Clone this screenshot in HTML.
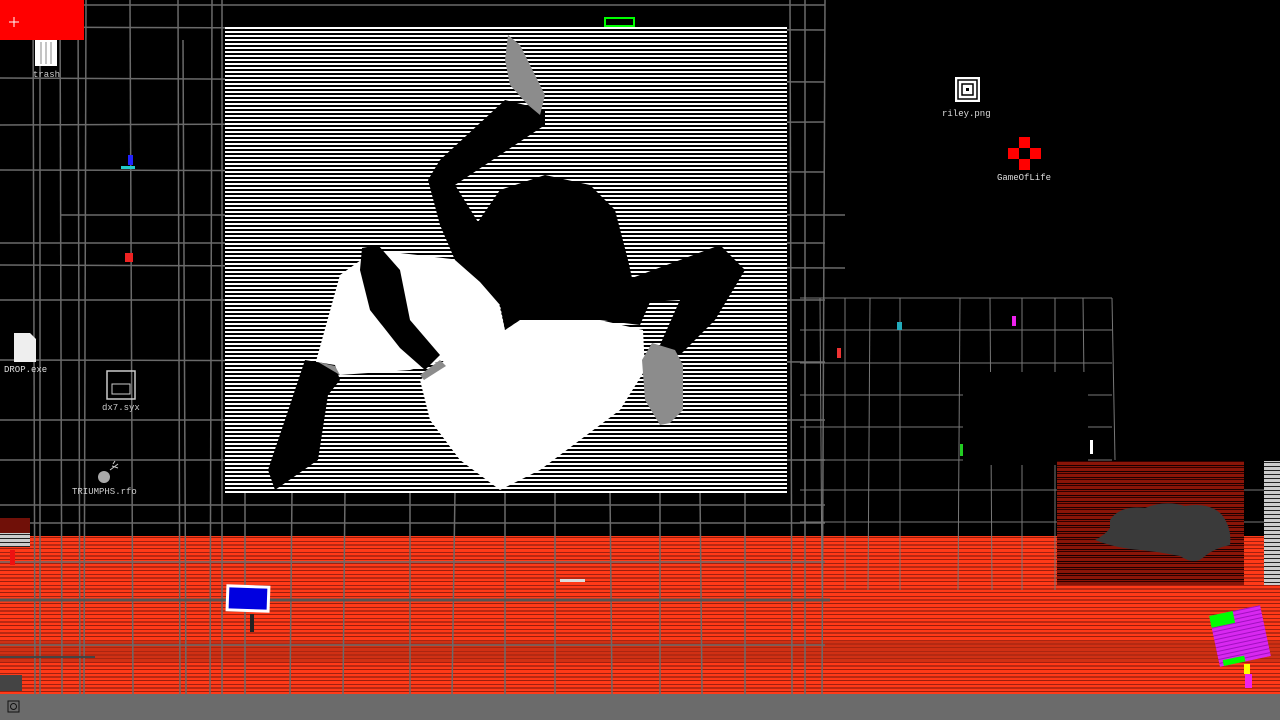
<!DOCTYPE html>
<html><head><meta charset="utf-8"><style>
html,body{margin:0;padding:0;width:1280px;height:720px;overflow:hidden;background:#000;font-family:"Liberation Mono",monospace}
</style></head><body>
<svg width="1280" height="720" viewBox="0 0 1280 720" xmlns="http://www.w3.org/2000/svg" style="position:absolute;left:0;top:0">
<defs>
<pattern id="scan" width="4" height="4" patternUnits="userSpaceOnUse"><rect width="4" height="4" fill="#fff"/><rect width="4" height="2" y="1" fill="#000"/></pattern>
<pattern id="red" width="10" height="11" patternUnits="userSpaceOnUse"><rect width="10" height="11" fill="#ff3a18"/><rect y="2" width="10" height="1" fill="#a02010"/><rect y="5" width="10" height="2" fill="#b82812"/><rect y="9" width="10" height="1" fill="#9a1e0c"/></pattern>
<pattern id="brick" width="10" height="6" patternUnits="userSpaceOnUse"><rect width="10" height="6" fill="#8a1508"/><rect y="3" width="10" height="1" fill="#1a0000"/><rect y="5" width="10" height="1" fill="#300000"/></pattern>
<pattern id="wstripe" width="4" height="4" patternUnits="userSpaceOnUse"><rect width="4" height="4" fill="#ccc"/><rect y="2" width="4" height="1" fill="#222"/></pattern>
<pattern id="mag" width="4" height="4" patternUnits="userSpaceOnUse"><rect width="4" height="4" fill="#d828f0"/><rect y="2" width="4" height="1" fill="#a010c0"/></pattern>
</defs>
<rect x="0" y="536" width="1280" height="158" fill="url(#red)"/>
<rect x="0" y="640" width="1280" height="22" fill="#b02a12" opacity="0.6"/>
<g stroke="#6a6a6a" stroke-width="1.5" fill="none">
<line x1="33" y1="0" x2="35" y2="694"/><line x1="40" y1="0" x2="40" y2="694"/>
<line x1="60" y1="0" x2="62" y2="694"/><line x1="78" y1="0" x2="80" y2="694"/>
<line x1="86" y1="0" x2="84" y2="694"/><line x1="130" y1="0" x2="133" y2="694"/>
<line x1="178" y1="0" x2="180" y2="694"/><line x1="183" y1="40" x2="186" y2="694"/>
<line x1="212" y1="0" x2="210" y2="694"/><line x1="222" y1="0" x2="222" y2="694"/>
<line x1="245" y1="490" x2="245" y2="694"/><line x1="292" y1="490" x2="290" y2="694"/>
<line x1="345" y1="490" x2="343" y2="694"/><line x1="410" y1="490" x2="410" y2="694"/>
<line x1="455" y1="490" x2="452" y2="694"/><line x1="505" y1="490" x2="505" y2="694"/>
<line x1="555" y1="490" x2="555" y2="694"/><line x1="610" y1="490" x2="612" y2="694"/>
<line x1="660" y1="490" x2="660" y2="694"/><line x1="700" y1="490" x2="702" y2="694"/>
<line x1="745" y1="490" x2="745" y2="694"/><line x1="790" y1="0" x2="792" y2="694"/>
<line x1="805" y1="0" x2="805" y2="694"/><line x1="825" y1="0" x2="822" y2="694"/>
<line x1="0" y1="5" x2="825" y2="5"/><line x1="0" y1="27" x2="825" y2="30"/>
<line x1="0" y1="78" x2="825" y2="82"/><line x1="0" y1="125" x2="825" y2="122"/>
<line x1="0" y1="170" x2="825" y2="172"/><line x1="60" y1="215" x2="845" y2="215"/>
<line x1="0" y1="243" x2="825" y2="243"/><line x1="0" y1="265" x2="845" y2="268"/>
<line x1="0" y1="300" x2="825" y2="300"/><line x1="0" y1="360" x2="825" y2="362"/>
<line x1="0" y1="420" x2="825" y2="420"/><line x1="0" y1="460" x2="825" y2="460"/>
<line x1="0" y1="505" x2="825" y2="505"/><line x1="0" y1="523" x2="825" y2="523"/>
<line x1="0" y1="562" x2="825" y2="562"/><line x1="0" y1="645" x2="825" y2="645"/>
</g>
<line x1="0" y1="600" x2="830" y2="600" stroke="#555" stroke-width="3"/>
<line x1="0" y1="657" x2="95" y2="657" stroke="#444" stroke-width="2"/>
<g stroke="#777" stroke-width="1" fill="none">
<line x1="800" y1="298" x2="1112" y2="298"/><line x1="800" y1="330" x2="1112" y2="330"/>
<line x1="800" y1="363" x2="1112" y2="363"/><line x1="800" y1="395" x2="1112" y2="395"/>
<line x1="800" y1="427" x2="1112" y2="427"/><line x1="800" y1="460" x2="1112" y2="460"/>
<line x1="800" y1="490" x2="1280" y2="490"/><line x1="800" y1="522" x2="1280" y2="522"/>
<line x1="820" y1="298" x2="822" y2="590"/><line x1="845" y1="298" x2="845" y2="590"/>
<line x1="870" y1="298" x2="868" y2="590"/><line x1="900" y1="298" x2="900" y2="590"/>
<line x1="960" y1="298" x2="958" y2="590"/><line x1="990" y1="298" x2="992" y2="590"/>
<line x1="1022" y1="298" x2="1022" y2="590"/><line x1="1055" y1="298" x2="1055" y2="590"/>
<line x1="1083" y1="298" x2="1085" y2="460"/><line x1="1112" y1="298" x2="1115" y2="460"/>
</g>
<rect x="963" y="372" width="125" height="93" fill="#000"/>
<rect x="1057" y="461" width="187" height="124" fill="url(#brick)"/>
<path d="M1110 520 Q1120 505 1145 508 Q1165 500 1185 506 Q1210 502 1222 515 Q1232 528 1230 545 Q1215 548 1205 556 Q1195 566 1180 556 Q1160 552 1140 550 Q1115 548 1095 540 Q1105 535 1110 528Z" fill="#3a3a3a"/>
<rect x="1264" y="461" width="16" height="124" fill="url(#wstripe)"/>
<rect x="225" y="27" width="562" height="466" fill="url(#scan)"/>
<path d="M340 275 L375 250 L460 260 L495 285 L505 330 L520 320 L600 320 L643 330 L645 370 L620 410 L580 440 L540 470 L500 490 L460 460 L430 420 L420 380 L445 360 L410 370 L340 375 L315 365 Z" fill="#fff"/>
<path d="M505 100 L545 110 L545 125 L470 175 L455 185 L478 222 L500 190 L545 175 L590 185 L615 210 L628 260 L632 278 L720 245 L745 270 L715 320 L680 355 L660 345 L680 300 L650 302 L640 325 L600 320 L520 320 L505 330 L500 305 L480 282 L455 260 L440 225 L428 180 L440 160 Z" fill="#000"/>
<path d="M362 248 L378 245 L400 270 L410 320 L440 355 L425 370 L400 348 L370 310 L360 270 Z" fill="#000"/>
<path d="M305 360 L335 365 L340 380 L328 395 L318 460 L275 490 L268 470 L290 405 Z" fill="#000"/>
<path d="M508 35 L520 45 L535 75 L545 95 L540 115 L528 105 L510 85 L505 60 Z" fill="#8c8c8c"/>
<path d="M652 343 L675 350 L683 365 L683 410 L670 423 L660 425 L645 400 L642 360 Z" fill="#8c8c8c"/>
<path d="M420 375 L440 360 L446 366 L424 380Z" fill="#8c8c8c"/>
<path d="M318 362 L335 366 L340 375Z" fill="#8c8c8c"/>
<rect x="0" y="0" width="84" height="40" fill="#ff0000"/>
<path d="M14 17v10M9 22h10" stroke="#fff" stroke-width="1"/>
<rect x="605" y="18" width="29" height="8" fill="none" stroke="#0f0" stroke-width="2"/>
<rect x="35" y="40" width="22" height="26" fill="#fff"/>
<path d="M41 42v22M46 42v22M51 42v22" stroke="#888"/>
<text x="33" y="77" fill="#ccc" font-size="9">trash</text>
<rect x="955" y="77" width="25" height="25" fill="#fff"/>
<rect x="958" y="80" width="19" height="19" fill="none" stroke="#000" stroke-width="1.5"/>
<rect x="962" y="84" width="11" height="11" fill="none" stroke="#000" stroke-width="1.5"/>
<rect x="966" y="88" width="3" height="3" fill="#000"/>
<text x="942" y="116" fill="#ddd" font-size="9">riley.png</text>
<rect x="1019" y="137" width="11" height="11" fill="#f00"/>
<rect x="1008" y="148" width="11" height="11" fill="#f00"/>
<rect x="1030" y="148" width="11" height="11" fill="#f00"/>
<rect x="1019" y="159" width="11" height="11" fill="#f00"/>
<text x="997" y="180" fill="#ddd" font-size="9">GameOfLife</text>
<path d="M14 333h16l6 6v23h-22z" fill="#eee"/>
<text x="4" y="372" fill="#ddd" font-size="9">DROP.exe</text>
<rect x="107" y="371" width="28" height="28" fill="none" stroke="#ccc" stroke-width="1.5"/>
<rect x="112" y="384" width="18" height="10" fill="none" stroke="#ccc"/>
<text x="102" y="410" fill="#ccc" font-size="9">dx7.syx</text>
<circle cx="104" cy="477" r="6" fill="#aaa"/><path d="M110 470l8-6M112 466l6 2M113 464l2-3" stroke="#ccc"/>
<text x="72" y="494" fill="#ccc" font-size="9">TRIUMPHS.rfo</text>
<rect x="128" y="155" width="5" height="10" fill="#22f"/><rect x="121" y="166" width="14" height="3" fill="#2cc"/>
<rect x="125" y="253" width="8" height="9" fill="#e22"/>
<rect x="837" y="348" width="4" height="10" fill="#e33"/>
<rect x="897" y="322" width="5" height="8" fill="#2ab"/>
<rect x="1012" y="316" width="4" height="10" fill="#e2e"/>
<rect x="960" y="444" width="3" height="12" fill="#2c2"/>
<rect x="1090" y="440" width="3" height="14" fill="#fff"/>
<rect x="0" y="518" width="30" height="15" fill="#701008"/>
<rect x="0" y="533" width="30" height="14" fill="url(#wstripe)"/>
<rect x="10" y="550" width="5" height="15" fill="#e11"/>
<rect x="0" y="675" width="22" height="16" fill="#444"/>
<g transform="rotate(2 248 598)"><rect x="226" y="585" width="44" height="27" fill="#fff"/><rect x="229" y="588" width="38" height="21" fill="#0000e0"/></g>
<rect x="250" y="614" width="4" height="18" fill="#222"/>
<rect x="560" y="579" width="25" height="3" fill="#ddd"/>
<g transform="rotate(-12 1240 636)"><rect x="1214" y="610" width="52" height="52" fill="url(#mag)"/><rect x="1214" y="610" width="24" height="12" fill="#0f0"/><rect x="1218" y="656" width="22" height="6" fill="#0f0"/></g>
<rect x="1244" y="664" width="6" height="10" fill="#ff0"/><rect x="1245" y="674" width="7" height="14" fill="#e2e"/>
<rect x="0" y="694" width="1280" height="26" fill="#6b6b6b"/>
<rect x="8" y="701" width="11" height="11" fill="none" stroke="#111"/>
<circle cx="13.5" cy="706.5" r="3" fill="none" stroke="#111"/>
</svg>
</body></html>
